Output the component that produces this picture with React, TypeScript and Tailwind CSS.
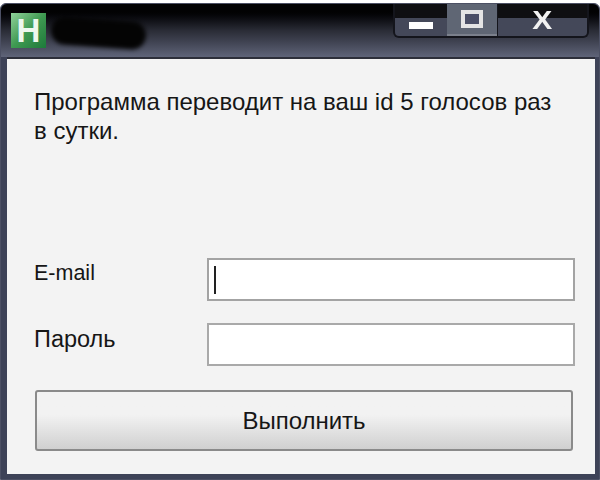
export default function App() {
  return (
    <div className="w-[600px] h-[480px] bg-white overflow-hidden pt-[3px] font-['Liberation_Sans',sans-serif] text-[#161616]">
      <div className="w-[600px] h-[477px] flex flex-col rounded-tl-[6px] rounded-tr-[6px] bg-[#3d4257] border border-[#4c5064]">
        {/* Title bar */}
        <div className="h-[53px] shrink-0 flex items-start justify-between rounded-tl-[6px] rounded-tr-[6px] bg-gradient-to-b from-[#020203] from-15% via-[#2a2c36] to-[#5f6479]">
          <div className="flex items-center pl-[10px] pt-[9px] gap-[5px]">
            <div className="w-[35px] h-[35px] flex items-center justify-center bg-gradient-to-br from-[#8fd29a] via-[#3f9a52] to-[#1c7a3a]">
              <span className="text-[#eef7ee] text-[33px] leading-none font-bold">H</span>
            </div>
            <div className="w-[95px] h-[28px] mt-[4px] rounded-full bg-[#040404] blur-[2px] rotate-[4deg]" />
          </div>
          <div className="flex h-[34px] w-[196px] mr-[10px] rounded-b-[6px] border-x-2 border-b-2 border-[#14151c] bg-gradient-to-b from-[#0f0f12] from-45% to-[#444859] to-45%">
            <div className="w-[52px] flex items-center justify-center">
              <div className="w-[24px] h-[7px] mt-[11px] bg-white" />
            </div>
            <div className="w-[50px] flex items-center justify-center bg-[#5f6674] border-b-2 border-[#7b808c]">
              <div className="w-[22px] h-[18px] border-[4px] border-[#e4e4e4] bg-[#4b4f66]" />
            </div>
            <div className="flex-1 flex items-center justify-center border-l border-[#14151c]">
              <span className="text-[#f2f2f2] text-[25px] leading-none font-bold scale-x-[1.2]">X</span>
            </div>
          </div>
        </div>
        {/* Client area */}
        <div className="flex-1 ml-[6px] mr-[4px] mb-[5px] bg-[#f3f3f3] border-t-2 border-[#2d2f3a] flex flex-col pl-[27px]">
          <p className="mt-[28px] text-[24px] leading-[29px] w-[525px]">
            Программа переводит на ваш id 5 голосов раз в сутки.
          </p>
          <div className="mt-[113px] flex items-center h-[43px]">
            <span className="w-[173px] text-[21.5px] -mt-[12px]">E-mail</span>
            <div className="w-[368px] h-[43px] bg-white border-[2px] border-[#a3a3a3] flex items-center pl-[5px]">
              <div className="w-[2px] h-[28px] bg-[#222]" />
            </div>
          </div>
          <div className="mt-[22px] flex items-center h-[43px]">
            <span className="w-[173px] text-[23.5px] -mt-[10px]">Пароль</span>
            <div className="w-[368px] h-[43px] bg-white border-[2px] border-[#a9a9a9]" />
          </div>
          <div className="mt-[24px] ml-[1px] w-[538px] h-[61px] flex items-center justify-center rounded-[3px] border-[2px] border-[#8a8a8a] bg-gradient-to-b from-[#f2f2f2] from-40% to-[#d0d0d0] text-[24px]">
            Выполнить
          </div>
        </div>
      </div>
    </div>
  );
}
